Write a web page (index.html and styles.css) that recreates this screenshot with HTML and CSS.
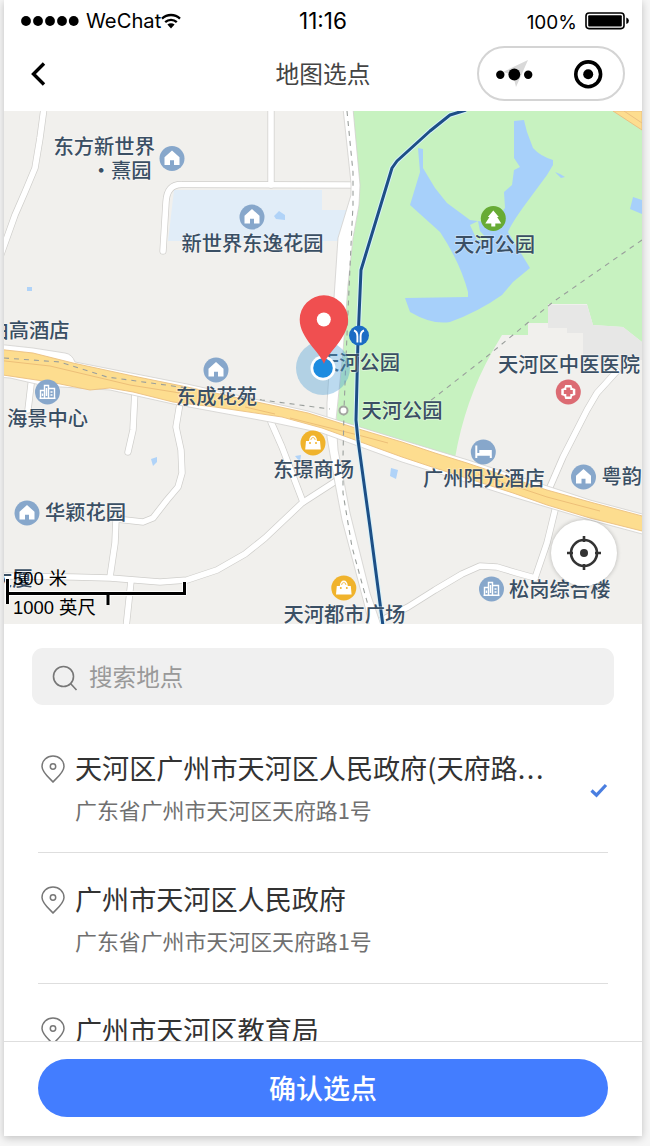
FILE: index.html
```html
<!DOCTYPE html>
<html lang="zh-CN">
<head>
    <meta charset="UTF-8">
    <meta name="viewport" content="width=device-width, initial-scale=1.0">
    <title>地图选点</title>
    <link rel="stylesheet" href="styles.css">
</head>
<body>
    <div class="phone">
        <div class="status-bar">
            <div class="status-left">
                <svg class="signal" width="58" height="12" viewBox="0 0 58 12">
                    <circle cx="5" cy="6" r="4.9"/>
                    <circle cx="17" cy="6" r="4.9"/>
                    <circle cx="29" cy="6" r="4.9"/>
                    <circle cx="41" cy="6" r="4.9"/>
                    <circle cx="52.7" cy="6" r="4.9"/>
                </svg>
                <span class="carrier">WeChat</span>
                <svg class="wifi" width="20" height="16" viewBox="0 0 20 16">
                    <path d="M1 5.6a13 13 0 0 1 18 0M4.2 9.1a8.4 8.4 0 0 1 11.6 0" fill="none" stroke="#000" stroke-width="2.3"/>
                    <path d="M6.4 11.6a5.2 5.2 0 0 1 7.2 0L10 15.4z"/>
                </svg>
            </div>
            <div class="time">11:16</div>
            <div class="status-right">
                <span>100%</span>
                <svg width="45" height="18" viewBox="0 0 45 18">
                    <rect x="1" y="1" width="38" height="15.6" rx="3" fill="none" stroke="#000" stroke-width="1.6"/>
                    <rect x="3.2" y="3.2" width="33.6" height="11.2" rx="1"/>
                    <path d="M41.3 5.6q2.6.8 2.6 3.2t-2.6 3.2z"/>
                </svg>
            </div>
        </div>

        <div class="nav-bar">
            <svg class="back" width="16" height="24" viewBox="0 0 16 24">
                <path d="M14 1.5L3.5 12L14 22.5" fill="none" stroke="#000" stroke-width="3.4"/>
            </svg>
            <h1 class="nav-title">地图选点</h1>
            <div class="capsule">
                <svg width="144" height="51" viewBox="479 48 144 51">
                    <path d="M528 60L503 72L513 75L516 87z" fill="#d9d9d9"/>
                    <circle cx="500.3" cy="74.8" r="4.2"/>
                    <circle cx="514.3" cy="74.5" r="5.9"/>
                    <circle cx="528.2" cy="74.8" r="4.2"/>
                    <circle cx="588.2" cy="74.3" r="12.4" fill="none" stroke="#000" stroke-width="3.6"/>
                    <circle cx="588.2" cy="74.3" r="5"/>
                </svg>
            </div>
        </div>

        <div class="map">
            <svg width="638" height="513" viewBox="4 111 638 513">
                <defs>
                    <g id="home">
                        <circle r="12.5" fill="#87a7cb"/>
                        <path d="M0-8L-7.5-1.2V6.5H-2V1.8H2V6.5H7.5V-1.2z" fill="#fff"/>
                    </g>
                    <g id="building">
                        <circle r="12.5" fill="#87a7cb"/>
                        <path d="M-7 6V-1.500H-3.500M-3 6V-6.500H1V6M1-3.500H7V6M-8 6.300H8M-1-4V4M3 0H5M3 3H5M-5 1.500V4" fill="none" stroke="#fff" stroke-width="1.4"/>
                    </g>
                    <g id="mall">
                        <circle r="12.5" fill="#f0b32c"/>
                        <path d="M-7-2H-4Q-3.5-7.5 0-7.5T4-2H7L7.8 6.5H-7.8z" fill="#fff"/>
                        <path d="M-2.2-3Q-2-5.5 0-5.5T2.2-3" fill="none" stroke="#f0b32c" stroke-width=".8"/>
                        <circle cx="-3" cy="0" r="1" fill="#f0b32c"/>
                        <circle cx="3" cy="0" r="1" fill="#f0b32c"/>
                    </g>

                    <!-- 道路 -->
                    <g id="roads">
                        <path d="M44 108L40 138L35 168L25 192L15 215L0 257"/>
                        <path d="M163 251L166 202Q167 184 182 184.5L354 185"/>
                        <path d="M271 108V185"/>
                        <path d="M32 376L28 410"/>
                        <path d="M135 390L133 430L128 452"/>
                        <path d="M180 403L176 427L181 450L182 473L178 487L167 500L153 518L143 522L116 519L115 543L110 577"/>
                        <path d="M0 576L73 577L110 578L160 582L187 580L217 570L245 554L265 538L302 503L336 481"/>
                        <path d="M131 581L126 628"/>
                        <path d="M271 422L282 447L303 502"/>
                        <path d="M617 371L597 393L587 410L563 457L550 487M556 506L547 543L535 578"/>
                        <path d="M374 624L408 607L435 590L462 574L480 566L497 567L517 573L535 578"/>
                    </g>
                </defs>

                <rect x="4" y="111" width="638" height="513" fill="#f1f0ed"/>
                <path d="M174 190H322V210H348L338 241H168z" fill="#e1edf8"/>

                <!-- 天河公园 -->
                <path d="M350 111H642V342L623 327L593 325L587 304H548V323H528V335H502L492 352Q465 400 455 458L336 424L343 352L348 285L353 238L359 205L360 185z" fill="#c7f2c0"/>
                <path d="M548 305H587L593 325L623 327L642 342V360H583V333H567V328H548z" fill="#e7e7e6"/>
                <path d="M418 148L423 149V168L435 188L447 203L470 220L493 223L505 208L504 192L512 185L514 170L520 167L514 158V121L524 120L527 132L533 148Q540 156 553 160V165L547 175L530 198Q512 222 508 232L530 268L513 282L502 295Q478 312 450 322Q432 325 410 312L405 298L468 297V292Q460 262 440 232L410 205L420 172z" fill="#a7d0fa"/>
                <path d="M470 225L478 221L480 231L488 240H477z" fill="#c7f2c0"/>
                <path d="M555 172L560 174L565 177L561 178zM633 197L642 200V214L630 209z" fill="#a7d0fa"/>
                <path d="M274 216L279 211L285 215V220L276 219zM27 287h5v4h-5zM151 459L157 457V462L153 466zM391 468L398 470L396 479L390 476zM295 456L301 455L300 462z" fill="#b0d3f8"/>

                <use href="#roads" class="road-edge"/>
                <use href="#roads" class="road"/>
                <path d="M343 108L351 183V195L338 238L334 298L327 403V437L335 483L342 520L365 607L370 628H382L370 593L350 513L338 450L336 420L343 352L348 285L353 238L359 205L360 185L353 108z" fill="#fff" stroke="#d2d1ce" stroke-width=".8"/>

                <!-- 主干道 -->
                <path d="M-4 344L33 348L65 353Q72 354 75 362L187 384L308 411L402 440L468 460L590 500L646 515V535L590 520L513 497L402 462L322 433L270 422L173 404L110 390L45 386L10 378L-4 377z" fill="#fff" stroke="#d2d1ce" stroke-width=".8"/>
                <path d="M-4 349L33 353L73 363L133 376L187 387L257 402L308 413L362 430L402 442L435 453L467 463L547 490L590 502L646 517V532L590 518L547 505L513 493L435 468L402 457L322 428L282 417L215 407L173 402L133 392L110 388L90 390L50 382L-4 374z" fill="#fddd8f" stroke="#ebbf80" stroke-width=".9"/>
                <path d="M-4 360L50 366L130 385L180 393M245 407L275 414M290 418L358 435L388 443M478 474L547 497L600 511" fill="none" stroke="#edbf78"/>
                <path d="M613 111H642V130z" fill="#fddd8f" stroke="#ebbf80"/>
                <path d="M624 111L642 123" stroke="#ebbf80"/>

                <path class="rail" d="M4 358L60 362L107 377L180 387L262 400L330 409"/>
                <path class="rail" d="M642 240L553 302L485 358L430 401"/>
                <path class="rail" d="M347 111L351 152L353 172V205L351 245L348 312L346 358L344 410L343 457V493L352 547L363 587L368 605"/>

                <path d="M466 110L450 115L430 131L397 161L392 168L361 270L358 340L356 420L358 440L370 527L383 626" fill="none" stroke="#d7f2fb" stroke-width="5" stroke-linejoin="round"/>
                <path d="M466 110L450 115L430 131L397 161L392 168L361 270L358 340L356 420L358 440L370 527L383 626" fill="none" stroke="#1d4f86" stroke-width="3" stroke-linejoin="round"/>
                <circle cx="343.5" cy="410.5" r="4" fill="#fff" stroke="#a3a6a0" stroke-width="2"/>

                <use href="#home" x="172" y="158.5"/>
                <use href="#home" x="252" y="217"/>
                <use href="#home" x="216" y="370"/>
                <use href="#home" x="27" y="513"/>
                <use href="#home" x="583.5" y="477"/>
                <use href="#building" x="47.5" y="392"/>
                <use href="#building" x="491.5" y="589"/>
                <use href="#mall" x="313" y="443"/>
                <use href="#mall" x="343.8" y="588"/>
                <g transform="translate(483.3 452)">
                    <circle r="12.5" fill="#87a7cb"/>
                    <path d="M-8-6.5H-6V1H-4V-2H8.5V6H6.500V3.800H-6V6H-8z" fill="#fff"/>
                </g>
                <g transform="translate(568.3 392)">
                    <circle r="12.5" fill="#dc6b73"/>
                    <path d="M-3-7H3L4-4L7-3V3L4 4L3 7H-3L-4 4L-7 3V-3L-4-4z" fill="#fff"/>
                    <path d="M-4.500 0H4.500M0-4.500V4.500" stroke="#dc6b73" stroke-width="4"/>
                </g>
                <g transform="translate(493.3 218.5)">
                    <circle r="12.5" fill="#67ab35"/>
                    <path d="M0-8L-5.5-1.5H-3.8L-8 5H-2V8H2V5H8L3.8-1.5H5.5z" fill="#fff"/>
                </g>
                <g transform="translate(359 335.5)">
                    <circle r="10" fill="#1b6cc4"/>
                    <path d="M-5-5Q-1.600-4-1.600 1V7M5-5Q1.600-4 1.600 1V7" fill="none" stroke="#fff" stroke-width="1.9"/>
                </g>

                <g class="labels">
                    <text x="53.5" y="154">东方新世界</text>
                    <text x="91" y="178">·</text>
                    <text x="111" y="178">熹园</text>
                    <text x="181.500" y="251">新世界东逸花园</text>
                    <text x="454" y="252.3">天河公园</text>
                    <text x="-11.500" y="338">柏高酒店</text>
                    <text x="176" y="403.5">东成花苑</text>
                    <text x="7" y="425.5">海景中心</text>
                    <text x="45" y="520">华颖花园</text>
                    <text x="-8" y="586">大厦</text>
                    <text x="319" y="369.500">天河公园</text>
                    <text x="361.500" y="417.5">天河公园</text>
                    <text x="273" y="477">东璟商场</text>
                    <text x="423" y="486">广州阳光酒店</text>
                    <text x="498" y="371.5">天河区中医医院</text>
                    <text x="601.5" y="484">粤韵</text>
                    <text x="509" y="597">松岗综合楼</text>
                    <text x="283.5" y="622">天河都市广场</text>
                </g>

                <!-- 当前位置 -->
                <circle cx="323" cy="368" r="27" fill="#4c9fd6" fill-opacity=".38"/>
                <circle cx="323" cy="368" r="12.5" fill="#fff"/>
                <circle cx="323" cy="368" r="9.8" fill="#1d8ce0"/>
                <path d="M324 364C320 352 299.7 338 299.7 319.5A24.2 24.2 0 0 1 348.1 319.5C348.1 338 328 352 324 364z" fill="#f04f50"/>
                <circle cx="323.8" cy="319.5" r="7" fill="#fff"/>

                <!-- 比例尺 -->
                <path d="M7.5 578V604M6 593.5H186M184.5 582V595M108 593V605" stroke="#fff" stroke-width="5"/>
                <path d="M7.5 579V604M6 593.5H186M184.5 582V595M108 593V605" stroke="#000" stroke-width="3"/>
                <g class="scale-text">
                    <text x="13" y="585">500 米</text>
                    <text x="13" y="614">1000 英尺</text>
                </g>
            </svg>
            <button class="locate">
                <svg width="36" height="36" viewBox="-18 -18 36 36" fill="none" stroke="#333">
                    <circle r="13" stroke-width="2.6"/>
                    <path d="M0-17V-11M0 17V11M-17 0H-11M17 0H11" stroke-width="2.6"/>
                    <circle r="4" fill="#333" stroke="none"/>
                </svg>
            </button>
        </div>

        <div class="search">
            <svg width="26" height="26" viewBox="0 0 26 26" fill="none" stroke="#777" stroke-width="1.6">
                <circle cx="11.5" cy="11.5" r="10"/>
                <path d="M18.5 18.5L24.5 25"/>
            </svg>
            <span>搜索地点</span>
        </div>

        <div class="list">
            <div class="item">
                <svg class="pin" width="24" height="28" viewBox="0 0 24 28">
                    <path d="M12 27C9 23.5 1 17.5 1 11.5A11 10.5 0 0 1 23 11.5C23 17.5 15 23.5 12 27z"/>
                    <circle cx="12" cy="11.5" r="2.7"/>
                </svg>
                <div class="info">
                    <div class="name">天河区广州市天河区人民政府(天府路<span class="dots">...</span></div>
                    <div class="address">广东省广州市天河区天府路1号</div>
                </div>
                <svg class="check" width="18" height="15" viewBox="0 0 18 15">
                    <path d="M1.5 7.5L6.5 12.2L16 2" fill="none" stroke="#4a7ee0" stroke-width="3.2"/>
                </svg>
            </div>
            <div class="item">
                <svg class="pin" width="24" height="28" viewBox="0 0 24 28">
                    <path d="M12 27C9 23.5 1 17.5 1 11.5A11 10.5 0 0 1 23 11.5C23 17.5 15 23.5 12 27z"/>
                    <circle cx="12" cy="11.5" r="2.7"/>
                </svg>
                <div class="info">
                    <div class="name">广州市天河区人民政府</div>
                    <div class="address">广东省广州市天河区天府路1号</div>
                </div>
            </div>
            <div class="item">
                <svg class="pin" width="24" height="28" viewBox="0 0 24 28">
                    <path d="M12 27C9 23.5 1 17.5 1 11.5A11 10.5 0 0 1 23 11.5C23 17.5 15 23.5 12 27z"/>
                    <circle cx="12" cy="11.5" r="2.7"/>
                </svg>
                <div class="info">
                    <div class="name">广州市天河区教育局</div>
                </div>
            </div>
        </div>

        <div class="footer">
            <button class="confirm">确认选点</button>
        </div>
    </div>
</body>
</html>
```

FILE: styles.css
```css
* {
    margin: 0;
    padding: 0;
    box-sizing: border-box;
}

body {
    font-family: "Noto Sans CJK SC", sans-serif;
    background: #f6f6f6;
    height: 1146px;
    padding: 0 8px 0 4px;
    overflow: hidden;
}

.phone {
    width: 638px;
    height: 1136px;
    background: #fff;
    box-shadow: 0 2px 8px rgba(0,0,0,0.22);
    display: flex;
    flex-direction: column;
}

.status-bar {
    height: 41px;
    padding: 0 12px;
    display: grid;
    grid-template-columns: 1fr auto 1fr;
    align-items: center;
    font-family: Inter, sans-serif;
    color: #000;
}

.status-left,
.status-right {
    display: flex;
    align-items: center;
}

.status-left {
    padding-left: 5px;
}

.carrier {
    font-size: 20.2px;
    margin-left: 7px;
}

.wifi {
    margin-left: 0;
}

.time {
    font-size: 22.5px;
}

.status-right {
    justify-content: flex-end;
    gap: 8px;
    font-size: 19px;
}

.status-right span {
    margin-top: 3px;
}

.nav-bar {
    height: 70px;
    padding: 5px 17px 10px;
    display: grid;
    grid-template-columns: 1fr auto 1fr;
    align-items: center;
}

.back {
    margin-left: 9px;
}

.nav-title {
    font-size: 23.7px;
    font-weight: 400;
    line-height: 1;
    color: #444;
}

.capsule {
    justify-self: end;
    width: 148px;
    height: 55px;
    border: 2px solid #d4d4d4;
    border-radius: 28px;
}

.map {
    position: relative;
    height: 513px;
    flex-shrink: 0;
    overflow: hidden;
}

.map svg {
    display: block;
}

.road-edge,
.road {
    fill: none;
    stroke-linecap: round;
    stroke-linejoin: round;
}

.road-edge {
    stroke: #cfcecb;
    stroke-width: 7px;
}

.road {
    stroke: #fff;
    stroke-width: 5.6px;
}

.rail {
    fill: none;
    stroke: #9a9f9c;
    stroke-width: 1.1px;
    stroke-dasharray: 5 5;
}

.labels {
    font-size: 20.3px;
    font-weight: 500;
    fill: #3a4f64;
    stroke: rgba(255,255,255,0.4);
    stroke-width: 1.6px;
    paint-order: stroke;
}

.scale-text {
    font-family: "Liberation Sans", "Noto Sans CJK SC", sans-serif;
    font-size: 18.4px;
    fill: #000;
}

.locate {
    position: absolute;
    right: 25px;
    bottom: 38px;
    width: 66px;
    height: 66px;
    border: none;
    border-radius: 50%;
    background: #fff;
    box-shadow: 0 0 4px rgba(0,0,0,0.25);
    display: flex;
    align-items: center;
    justify-content: center;
}

.search {
    height: 57px;
    flex-shrink: 0;
    margin: 24px 28px 0;
    padding: 0 20px 2px;
    border-radius: 11px;
    background: #f0f0f0;
    display: flex;
    align-items: center;
    gap: 11px;
    font-size: 23.6px;
    color: #999;
}

.search svg {
    margin-top: 5px;
}

.list {
    flex: 1;
    min-height: 0;
    overflow: hidden;
    padding: 17px 34px 0;
}

.item {
    height: 131px;
    padding: 28px 0 0 3px;
    border-bottom: 1px solid #dedede;
    display: flex;
    align-items: flex-start;
}

.pin {
    margin-top: 5px;
    margin-right: 10px;
    fill: none;
    stroke: #777;
    stroke-width: 1.5px;
}

.info {
    flex: 1;
}

.name {
    font-size: 27.1px;
    line-height: 36px;
    color: #333;
    white-space: nowrap;
}

.dots {
    letter-spacing: 1.6px;
}

.address {
    margin-top: 8px;
    font-size: 21.9px;
    line-height: 32px;
    color: #707070;
}

.check {
    margin-top: 33px;
}

.footer {
    height: 95px;
    padding: 17px 34px 0;
    border-top: 1px solid #dedede;
    background: #fff;
}

.confirm {
    display: block;
    width: 100%;
    height: 58px;
    padding-bottom: 2px;
    border: none;
    border-radius: 29px;
    background: #437dff;
    color: #fff;
    font-family: inherit;
    font-size: 27px;
    font-weight: 500;
    line-height: 1;
}
```
